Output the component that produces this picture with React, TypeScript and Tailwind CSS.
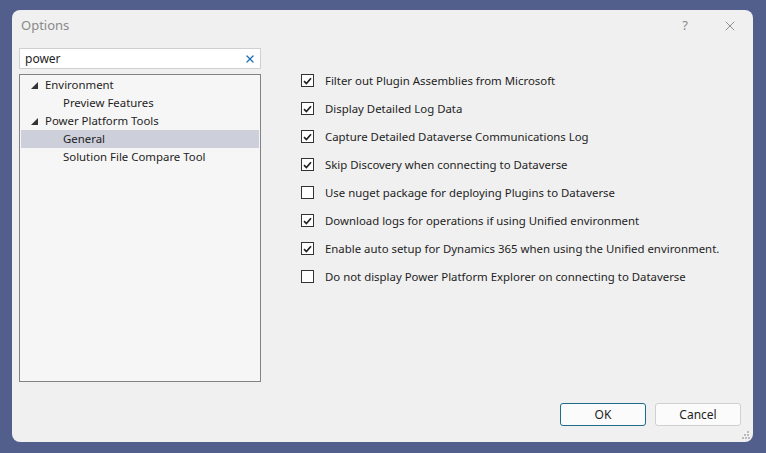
import { X } from 'lucide-react';

const options = [
  { label: 'Filter out Plugin Assemblies from Microsoft', checked: true },
  { label: 'Display Detailed Log Data', checked: true },
  { label: 'Capture Detailed Dataverse Communications Log', checked: true },
  { label: 'Skip Discovery when connecting to Dataverse', checked: true },
  { label: 'Use nuget package for deploying Plugins to Dataverse', checked: false },
  { label: 'Download logs for operations if using Unified environment', checked: true },
  { label: 'Enable auto setup for Dynamics 365 when using the Unified environment.', checked: true },
  { label: 'Do not display Power Platform Explorer on connecting to Dataverse', checked: false },
];

const tree = [
  { label: 'Environment', level: 0 },
  { label: 'Preview Features', level: 1 },
  { label: 'Power Platform Tools', level: 0 },
  { label: 'General', level: 1, selected: true },
  { label: 'Solution File Compare Tool', level: 1 },
];

function Checkbox({ checked }: { checked: boolean }) {
  return (
    <div className="flex h-[13px] w-[13px] items-center justify-center border border-[#333] bg-white">
      {checked && (
        <svg width="9" height="8" viewBox="0 0 9 8">
          <path d="M1 4.2 L3.4 6.6 L8 1.2" fill="none" stroke="#222" strokeWidth="1.7" />
        </svg>
      )}
    </div>
  );
}

export default function App() {
  return (
    <div className="h-[453px] w-[766px] bg-[#525e8c] pl-[12px] pt-[10px] text-[11.4px] text-[#1e1e1e]" style={{ fontFamily: '"Segoe UI", "Noto Sans", sans-serif' }}>
      <div className="relative flex h-[432px] w-[741px] flex-col rounded-[8px] bg-[#f0f0f0]">
        <div className="flex h-[30px] items-center pl-[9px] pr-[15px] pt-[2px]">
          <span className="text-[13px] text-[#8a8a8a]">Options</span>
          <span className="ml-auto mr-[34px] text-[13px] text-[#8a8a8a]">?</span>
          <X className="h-[16px] w-[16px] text-[#777]" strokeWidth={1.2} />
        </div>
        <div className="flex flex-1 pl-[7px] pt-[8px]">
          <div className="flex w-[242px] flex-col">
            <div className="flex h-[21px] items-center border border-[#cfcfcf] bg-white pl-[5px] pr-[4px]">
              <span className="leading-none text-[12px]">power</span>
              <X className="ml-auto h-[12px] w-[12px] text-[#1c6fb5]" strokeWidth={2.6} />
            </div>
            <div className="mt-[5px] h-[308px] border border-[#828282] bg-[#f6f6f6] px-[1px] pt-[1px]">
              {tree.map((t) => (
                <div key={t.label} className={`flex h-[18px] items-center ${t.selected ? 'bg-[#cdcfdb]' : ''}`}>
                  {t.level === 0 ? (
                    <>
                      <svg width="7" height="7" viewBox="0 0 7 7" className="ml-[10px] mr-[7px]">
                        <path d="M7 0 L7 7 L0 7 Z" fill="#333" />
                      </svg>
                      <span>{t.label}</span>
                    </>
                  ) : (
                    <span className="pl-[42px]">{t.label}</span>
                  )}
                </div>
              ))}
            </div>
          </div>
          <div className="ml-[40px] flex flex-col gap-[15px] pt-[26px]">
            {options.map((o) => (
              <div key={o.label} className="flex h-[13px] items-center">
                <Checkbox checked={o.checked} />
                <span className="ml-[11px] whitespace-nowrap">{o.label}</span>
              </div>
            ))}
          </div>
        </div>
        <div className="flex justify-end gap-[9px] pb-[16px] pr-[12px]">
          <button className="h-[23px] w-[86px] rounded-[3px] border border-[#1f6b8a] bg-[#fbfbfb] text-[12px]">OK</button>
          <button className="h-[23px] w-[86px] rounded-[3px] border border-[#d0d0d0] bg-[#fbfbfb] text-[12px]">Cancel</button>
        </div>
        <svg width="8" height="8" viewBox="0 0 8 8" className="absolute bottom-[3px] right-[3px]">
          <rect x="5" y="0" width="2" height="2" fill="#bbb" />
          <rect x="2" y="3" width="2" height="2" fill="#bbb" />
          <rect x="5" y="3" width="2" height="2" fill="#bbb" />
          <rect x="0" y="6" width="2" height="2" fill="#bbb" />
          <rect x="3" y="6" width="2" height="2" fill="#bbb" />
          <rect x="6" y="6" width="2" height="2" fill="#bbb" />
        </svg>
      </div>
    </div>
  );
}
